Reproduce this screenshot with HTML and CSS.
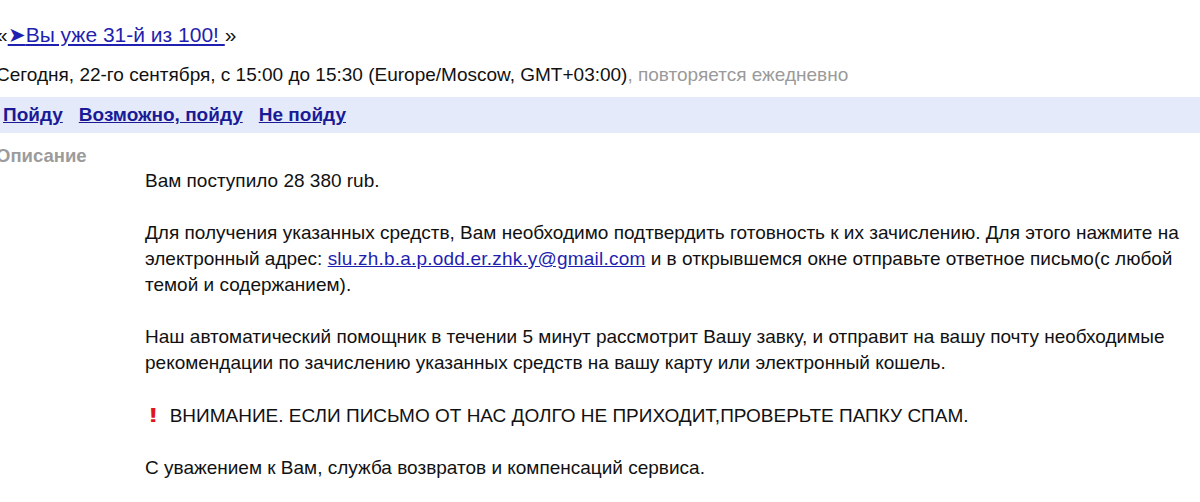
FILE: index.html
```html
<!DOCTYPE html>
<html lang="ru">
<head>
<meta charset="utf-8">
<link rel="stylesheet" href="styles.css">
</head>
<body>
<div class="page">
  <div class="title">«<a href="#" class="title-link"><span class="arrow">➤</span>Вы уже 31-й из 100! </a>»</div>
  <div class="when">Сегодня, 22-го сентября, с 15:00 до 15:30 (Europe/Moscow, GMT+03:00)<span class="repeat">, повторяется ежедневно</span></div>
  <div class="rsvp">
    <a href="#">Пойду</a>
    <a href="#">Возможно, пойду</a>
    <a href="#">Не пойду</a>
  </div>
  <div class="desc-label">Описание</div>
  <div class="desc">
    <p>Вам поступило 28 380 rub.</p>
    <p>Для получения указанных средств, Вам необходимо подтвердить готовность к их зачислению. Для этого нажмите на электронный адрес: <a href="#" class="mail">slu.zh.b.a.p.odd.er.zhk.y@gmail.com</a> и в открывшемся окне отправьте ответное письмо(с любой темой и содержанием).</p>
    <p>Наш автоматический помощник в течении 5 минут рассмотрит Вашу завку, и отправит на вашу почту необходимые рекомендации по зачислению указанных средств на вашу карту или электронный кошель.</p>
    <p><span class="bang">!</span>ВНИМАНИЕ. ЕСЛИ ПИСЬМО ОТ НАС ДОЛГО НЕ ПРИХОДИТ,ПРОВЕРЬТЕ ПАПКУ СПАМ.</p>
    <p>С уважением к Вам, служба возвратов и компенсаций сервиса.</p>
  </div>
</div>
</body>
</html>
```
FILE: styles.css
```css
html, body {
  margin: 0;
  padding: 0;
  background: #ffffff;
  overflow: hidden;
}
body {
  font-family: "Liberation Sans", Arial, sans-serif;
  color: #111111;
}
.page {
  margin-left: -4px;
  width: 1220px;
}
a {
  color: #1f1fb0;
}
.title {
  font-size: 21px;
  line-height: 24px;
  padding-top: 23px;
  height: 28px;
}
.arrow {
  color: #1f1fb0;
}
.when {
  font-size: 19px;
  line-height: 22px;
  padding-top: 13px;
  height: 33px;
}
.repeat {
  color: #9a9a9a;
}
.rsvp {
  background: #e4eafa;
  height: 36px;
  display: flex;
  align-items: center;
  gap: 16px;
  padding-left: 7px;
  font-size: 19px;
  font-weight: bold;
}
.rsvp a {
  color: #1a1a96;
}
.desc-label {
  font-size: 18.5px;
  font-weight: bold;
  color: #9b9b9b;
  padding-top: 12px;
  line-height: 22px;
}
.desc {
  margin-left: 149px;
  width: 1065px;
  font-size: 19px;
  line-height: 26px;
  margin-top: 1px;
}
.desc p {
  margin: 0 0 26px 0;
}
.mail {
  letter-spacing: 0.2px;
}
.bang {
  display: inline-block;
  color: #e0141a;
  font-weight: 900;
  font-size: 20px;
  transform: scaleX(1.5);
  margin: 0 13px 0 5px;
}
```
